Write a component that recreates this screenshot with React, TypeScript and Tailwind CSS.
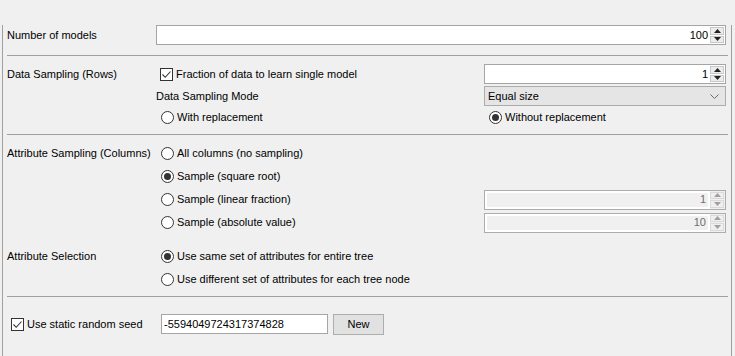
import React from "react";

const font = { fontFamily: '"Liberation Sans", Arial, sans-serif' };

const Arrow = ({ up, disabled }: { up?: boolean; disabled?: boolean }) => (
  <svg width="7" height="4" viewBox="0 0 7 4">
    <path
      d={up ? "M0 4 L3.5 0 L7 4 Z" : "M0 0 L3.5 4 L7 0 Z"}
      fill={disabled ? "#a0a0a0" : "#202020"}
    />
  </svg>
);

const Spinner = ({ disabled }: { disabled?: boolean }) => (
  <div className="flex flex-col w-[15px] shrink-0 gap-[1px] py-[1px] pr-[1px]">
    <div
      className={`flex-1 flex items-center justify-center border ${
        disabled ? "border-[#dadada] bg-[#efefef]" : "border-[#c8c8c8] bg-[#ececec]"
      }`}
    >
      <Arrow up disabled={disabled} />
    </div>
    <div
      className={`flex-1 flex items-center justify-center border ${
        disabled ? "border-[#dadada] bg-[#efefef]" : "border-[#c8c8c8] bg-[#ececec]"
      }`}
    >
      <Arrow disabled={disabled} />
    </div>
  </div>
);

const SpinField = ({
  value,
  disabled,
  className,
}: {
  value: string;
  disabled?: boolean;
  className?: string;
}) => (
  <div
    className={`flex h-[20px] border ${
      disabled ? "border-[#adadad] bg-[#f0f0f0]" : "border-[#a5a5a5] bg-white"
    } ${className ?? ""}`}
  >
    <div
      className={`flex-1 flex items-center justify-end pr-[2px] ${
        disabled ? "border-2 border-white text-[#6d6d6d]" : "text-black"
      }`}
    >
      {value}
    </div>
    <Spinner disabled={disabled} />
  </div>
);

const Radio = ({ checked, label }: { checked?: boolean; label: string }) => (
  <div className="flex items-center gap-[3px] pl-[5px]">
    <div className="w-[13px] h-[13px] rounded-full border border-[#333333] bg-white flex items-center justify-center">
      {checked && <div className="w-[7px] h-[7px] rounded-full bg-[#333333]" />}
    </div>
    <span>{label}</span>
  </div>
);

const Checkbox = ({ label, className }: { label: string; className?: string }) => (
  <div className={`flex items-center gap-[3px] ${className ?? ""}`}>
    <div className="w-[13px] h-[13px] border border-[#333333] bg-white flex items-center justify-center">
      <svg width="11" height="11" viewBox="0 0 11 11">
        <path d="M1.5 5.5 L4.2 8.3 L9.5 2.5" stroke="#333333" strokeWidth="1.1" fill="none" />
      </svg>
    </div>
    <span>{label}</span>
  </div>
);

const Separator = () => <div className="h-px bg-[#a0a0a0]" />;

export default function App() {
  return (
    <div
      className="w-[735px] h-[356px] bg-[#f0f0f0] pl-[2px] pr-[3px] text-[11px] text-black overflow-hidden"
      style={font}
    >
      <div className="h-full border-x border-[#a0a0a0] pl-[4px] pr-[3px]">
        {/* number of models */}
        <div className="flex items-center h-[20px] mt-[25px] pr-[2px]">
          <div className="w-[149px] shrink-0">Number of models</div>
          <SpinField value="100" className="flex-1" />
        </div>

        <div className="mt-[10px]">
          <Separator />
        </div>

        {/* data sampling rows */}
        <div className="flex mt-[8px] pr-[2px]">
          <div className="w-[149px] shrink-0 h-[20px] flex items-center">Data Sampling (Rows)</div>
          <div className="flex-1 flex flex-col">
            <div className="flex h-[20px] items-center">
              <Checkbox label="Fraction of data to learn single model" className="w-[328px] pl-[4px]" />
              <SpinField value="1" className="flex-1" />
            </div>
            <div className="flex h-[20px] items-center mt-[2px]">
              <div className="w-[328px]">Data Sampling Mode</div>
              <div className="flex-1 h-[20px] border border-[#acacac] bg-[#e5e5e5] flex items-center justify-between pl-[3px] pr-[6px]">
                <span>Equal size</span>
                <svg width="9" height="5" viewBox="0 0 9 5">
                  <path d="M0.5 0.5 L4.5 4.5 L8.5 0.5" stroke="#6a6a6a" strokeWidth="1" fill="none" />
                </svg>
              </div>
            </div>
            <div className="flex h-[18px] items-center mt-[2px]">
              <div className="w-[328px]">
                <Radio label="With replacement" />
              </div>
              <div className="flex-1">
                <Radio checked label="Without replacement" />
              </div>
            </div>
          </div>
        </div>

        <div className="mt-[8px]">
          <Separator />
        </div>

        {/* attribute sampling columns */}
        <div className="flex mt-[7px] pr-[2px]">
          <div className="w-[149px] shrink-0 h-[23px] flex items-center">Attribute Sampling (Columns)</div>
          <div className="flex-1 flex flex-col">
            <div className="flex h-[23px] items-center">
              <Radio label="All columns (no sampling)" />
            </div>
            <div className="flex h-[23px] items-center">
              <Radio checked label="Sample (square root)" />
            </div>
            <div className="flex h-[23px] items-center">
              <div className="w-[328px]">
                <Radio label="Sample (linear fraction)" />
              </div>
              <SpinField value="1" disabled className="flex-1" />
            </div>
            <div className="flex h-[23px] items-center">
              <div className="w-[328px]">
                <Radio label="Sample (absolute value)" />
              </div>
              <SpinField value="10" disabled className="flex-1" />
            </div>
          </div>
        </div>

        {/* attribute selection */}
        <div className="flex mt-[11px]">
          <div className="w-[149px] shrink-0 h-[23px] flex items-center">Attribute Selection</div>
          <div className="flex-1 flex flex-col">
            <div className="flex h-[23px] items-center">
              <Radio checked label="Use same set of attributes for entire tree" />
            </div>
            <div className="flex h-[23px] items-center">
              <Radio label="Use different set of attributes for each tree node" />
            </div>
          </div>
        </div>

        <div className="mt-[5px]">
          <Separator />
        </div>

        {/* random seed */}
        <div className="flex items-center h-[20px] mt-[17px]">
          <Checkbox label="Use static random seed" className="w-[154px] pl-[4px]" />
          <div className="w-[167px] h-[20px] border border-[#a5a5a5] bg-white flex items-center pl-[2px]">
            -5594049724317374828
          </div>
          <button className="ml-[5px] w-[51px] h-[21px] border border-[#adadad] bg-[#e1e1e1] flex items-center justify-center">
            New
          </button>
        </div>
      </div>
    </div>
  );
}
